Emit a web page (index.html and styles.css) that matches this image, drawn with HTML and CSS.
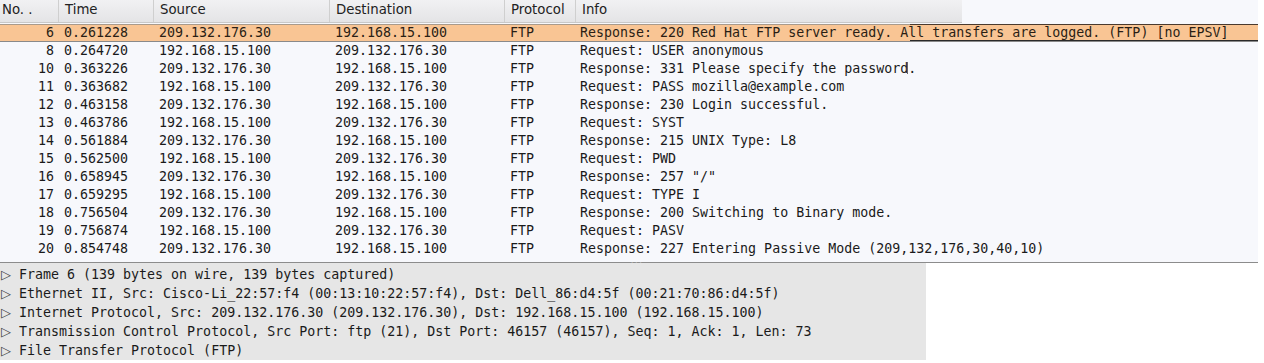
FILE: index.html
```html
<!DOCTYPE html>
<html>
<head>
<meta charset="utf-8">
<link rel="stylesheet" href="styles.css">
</head>
<body>
<div class="list">
  <div class="head">
    <div class="hc c-no">No. .</div>
    <div class="hc c-time">Time</div>
    <div class="hc c-src">Source</div>
    <div class="hc c-dst">Destination</div>
    <div class="hc c-proto">Protocol</div>
    <div class="hc c-info">Info</div>
  </div>
  <div class="rows">
    <div class="row sel"><span class="c-no">6</span><span class="c-time">0.261228</span><span class="c-src">209.132.176.30</span><span class="c-dst">192.168.15.100</span><span class="c-proto">FTP</span><span class="c-info">Response: 220 Red Hat FTP server ready. All transfers are logged. (FTP) [no EPSV]</span><span class="focus"></span></div>
    <div class="row"><span class="c-no">8</span><span class="c-time">0.264720</span><span class="c-src">192.168.15.100</span><span class="c-dst">209.132.176.30</span><span class="c-proto">FTP</span><span class="c-info">Request: USER anonymous</span></div>
    <div class="row"><span class="c-no">10</span><span class="c-time">0.363226</span><span class="c-src">209.132.176.30</span><span class="c-dst">192.168.15.100</span><span class="c-proto">FTP</span><span class="c-info">Response: 331 Please specify the password<i class="caret"></i>.</span></div>
    <div class="row"><span class="c-no">11</span><span class="c-time">0.363682</span><span class="c-src">192.168.15.100</span><span class="c-dst">209.132.176.30</span><span class="c-proto">FTP</span><span class="c-info">Request: PASS mozilla@example.com</span></div>
    <div class="row"><span class="c-no">12</span><span class="c-time">0.463158</span><span class="c-src">209.132.176.30</span><span class="c-dst">192.168.15.100</span><span class="c-proto">FTP</span><span class="c-info">Response: 230 Login successful.</span></div>
    <div class="row"><span class="c-no">13</span><span class="c-time">0.463786</span><span class="c-src">192.168.15.100</span><span class="c-dst">209.132.176.30</span><span class="c-proto">FTP</span><span class="c-info">Request: SYST</span></div>
    <div class="row"><span class="c-no">14</span><span class="c-time">0.561884</span><span class="c-src">209.132.176.30</span><span class="c-dst">192.168.15.100</span><span class="c-proto">FTP</span><span class="c-info">Response: 215 UNIX Type: L8</span></div>
    <div class="row"><span class="c-no">15</span><span class="c-time">0.562500</span><span class="c-src">192.168.15.100</span><span class="c-dst">209.132.176.30</span><span class="c-proto">FTP</span><span class="c-info">Request: PWD</span></div>
    <div class="row"><span class="c-no">16</span><span class="c-time">0.658945</span><span class="c-src">209.132.176.30</span><span class="c-dst">192.168.15.100</span><span class="c-proto">FTP</span><span class="c-info">Response: 257 "/"</span></div>
    <div class="row"><span class="c-no">17</span><span class="c-time">0.659295</span><span class="c-src">192.168.15.100</span><span class="c-dst">209.132.176.30</span><span class="c-proto">FTP</span><span class="c-info">Request: TYPE I</span></div>
    <div class="row"><span class="c-no">18</span><span class="c-time">0.756504</span><span class="c-src">209.132.176.30</span><span class="c-dst">192.168.15.100</span><span class="c-proto">FTP</span><span class="c-info">Response: 200 Switching to Binary mode.</span></div>
    <div class="row"><span class="c-no">19</span><span class="c-time">0.756874</span><span class="c-src">192.168.15.100</span><span class="c-dst">209.132.176.30</span><span class="c-proto">FTP</span><span class="c-info">Request: PASV</span></div>
    <div class="row"><span class="c-no">20</span><span class="c-time">0.854748</span><span class="c-src">209.132.176.30</span><span class="c-dst">192.168.15.100</span><span class="c-proto">FTP</span><span class="c-info">Response: 227 Entering Passive Mode (209,132,176,30,40,10)</span></div>
  </div>
  <div class="grip">...</div>
</div>
<div class="details">
  <div class="line"><span class="tri">▷</span>Frame 6 (139 bytes on wire, 139 bytes captured)</div>
  <div class="line"><span class="tri">▷</span>Ethernet II, Src: Cisco-Li_22:57:f4 (00:13:10:22:57:f4), Dst: Dell_86:d4:5f (00:21:70:86:d4:5f)</div>
  <div class="line"><span class="tri">▷</span>Internet Protocol, Src: 209.132.176.30 (209.132.176.30), Dst: 192.168.15.100 (192.168.15.100)</div>
  <div class="line"><span class="tri">▷</span>Transmission Control Protocol, Src Port: ftp (21), Dst Port: 46157 (46157), Seq: 1, Ack: 1, Len: 73</div>
  <div class="line"><span class="tri">▷</span>File Transfer Protocol (FTP)</div>
</div>
</body>
</html>
```

FILE: styles.css
```css
html, body {
  margin: 0;
  padding: 0;
  background: #ffffff;
}
body {
  width: 1264px;
  height: 363px;
  overflow: hidden;
  font-family: "DejaVu Sans Mono", "Liberation Mono", monospace;
  font-size: 13.3px;
  color: #1a1a1a;
}
.list {
  position: relative;
  width: 1258px;
  height: 262px;
  background: #f7f8fc;
  border-bottom: 1px solid #8c8c8c;
}
.head {
  display: flex;
  width: 962px;
  height: 23px;
  background: linear-gradient(#f1f1f3, #e4e4e6);
  border-bottom: 1px solid #c8c8c8;
  box-sizing: border-box;
  font-family: "DejaVu Sans", sans-serif;
  font-size: 13.3px;
  color: #222;
}
.hc {
  box-sizing: border-box;
  height: 22px;
  line-height: 20px;
  padding-left: 6px;
  border-left: 1px solid #cfcfcf;
}
.head .c-no { padding-left: 2px; border-left: none; width: 58px; }
.head .c-time { width: 95px; }
.head .c-src { width: 176px; }
.head .c-dst { width: 175px; }
.head .c-proto { width: 71px; }
.head .c-info { flex: 1; }

.rows {
  display: flex;
  flex-direction: column;
  padding-top: 1px;
}
.row {
  position: relative;
  display: flex;
  height: 18px;
  line-height: 18px;
  white-space: pre;
}
.row span { display: block; }
.row .c-no { width: 54px; text-align: right; padding-right: 10px; }
.row .c-time { width: 95px; }
.row .c-src { width: 176px; }
.row .c-dst { width: 175px; }
.row .c-proto { width: 70px; }
.row .c-info { flex: 1; }
.caret {
  display: inline-block;
  width: 1px;
  height: 12px;
  margin-left: -1px;
  vertical-align: -1px;
  background: #666;
}
.row.sel {
  background: #f9c594;
  box-shadow: inset 0 1px 0 #a89a8c, inset 0 -1px 0 #8a8a8a;
  color: #2a1e14;
}
.focus {
  position: absolute;
  left: 910px;
  top: 0;
  width: 348px;
  height: 17px;
  border-top: 1px solid #4a3a2e;
  border-bottom: 1px solid #2a2a2a;
  box-sizing: border-box;
  display: block;
}
.grip {
  position: absolute;
  left: 630px;
  bottom: -3px;
  font-size: 7px;
  color: #b8b8b8;
  line-height: 7px;
}
.details {
  width: 926px;
  height: 95px;
  padding-top: 2px;
  background: #e6e6e6;
}
.line {
  height: 19px;
  line-height: 19px;
  white-space: pre;
  display: flex;
}
.tri {
  display: block;
  width: 19px;
  padding-left: 1px;
  box-sizing: border-box;
  font-family: "DejaVu Sans", sans-serif;
  font-size: 13px;
  color: #444;
}
```
